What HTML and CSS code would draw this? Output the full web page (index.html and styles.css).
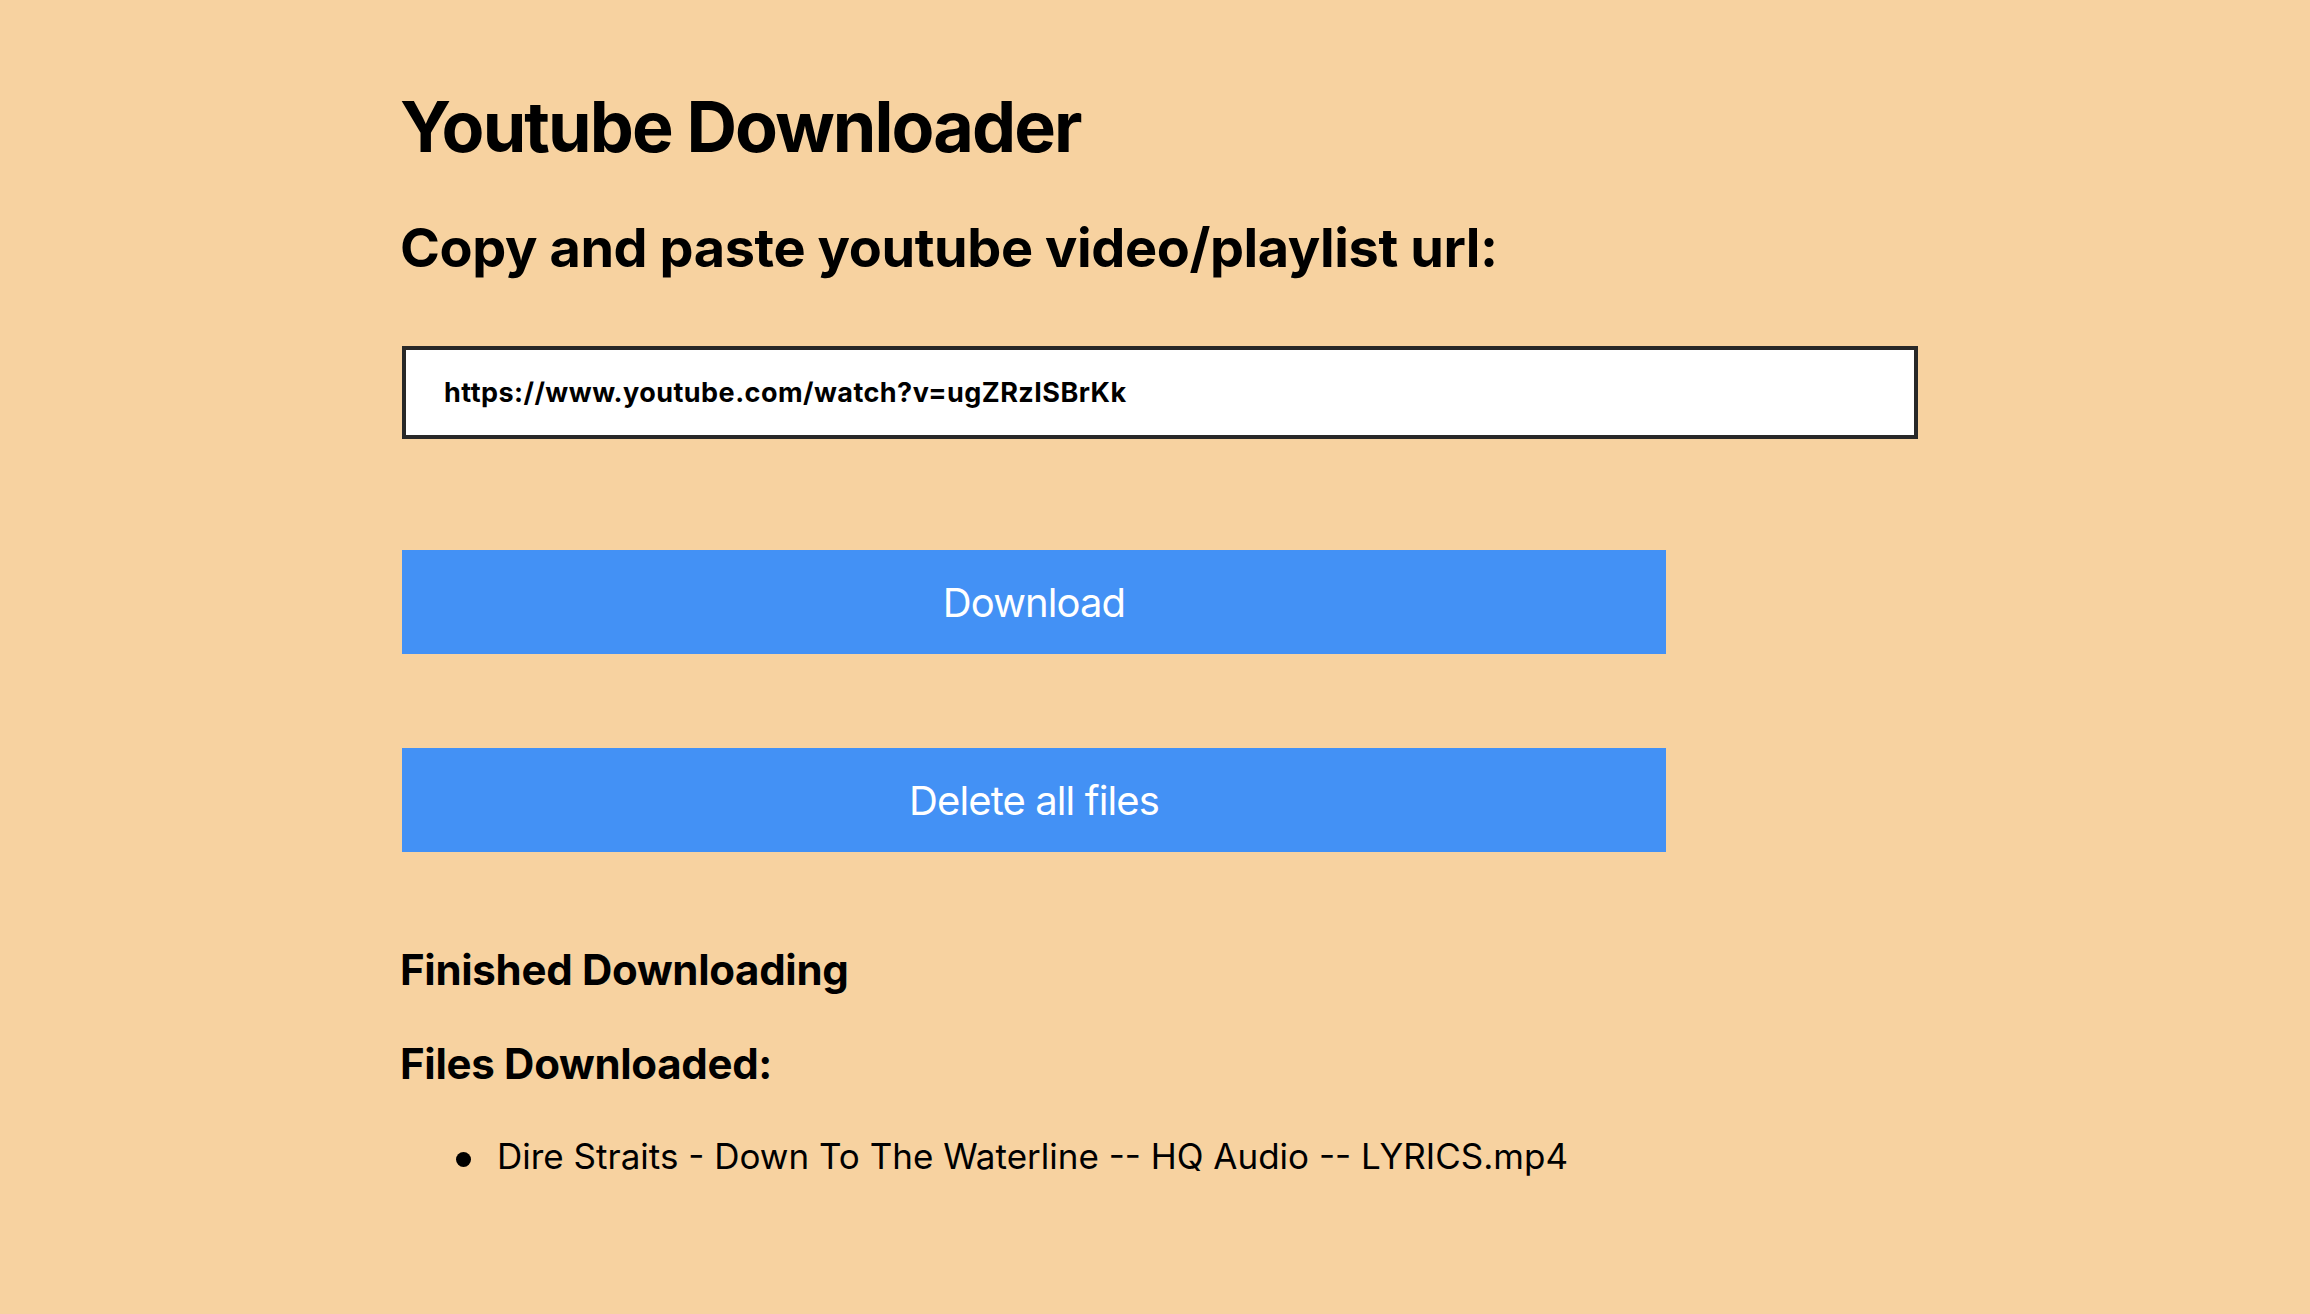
FILE: index.html
```html
<!DOCTYPE html>
<html>
<head>
<meta charset="utf-8">
<title>Youtube Downloader</title>
<link rel="stylesheet" href="styles.css">
</head>
<body>
<main class="page">
  <h1 class="title">Youtube Downloader</h1>
  <h2 class="subtitle">Copy and paste youtube video/playlist url:</h2>
  <input class="url-input" type="text" value="https://www.youtube.com/watch?v=ugZRzISBrKk">
  <button class="btn btn-download">Download</button>
  <button class="btn btn-delete">Delete all files</button>
  <h3 class="status">Finished Downloading</h3>
  <h3 class="files-title">Files Downloaded:</h3>
  <ul class="files">
    <li class="file">Dire Straits - Down To The Waterline -- HQ Audio -- LYRICS.mp4</li>
  </ul>
</main>
</body>
</html>
```

FILE: styles.css
```css
html, body {
  margin: 0;
  padding: 0;
  background: #f7d2a0;
}

body {
  font-family: Inter, "Noto Sans", sans-serif;
  color: #000;
  min-height: 1314px;
}

.page {
  display: flex;
  flex-direction: column;
  align-items: flex-start;
  padding: 92px 0 0 400px;
}

.title {
  margin: 0;
  font-size: 70px;
  line-height: 1;
  font-weight: 700;
  letter-spacing: -1.9px;
}

.subtitle {
  margin: 59px 0 0;
  font-size: 54px;
  line-height: 1;
  font-weight: 700;
  letter-spacing: -0.4px;
}

.url-input {
  margin: 71px 0 0 2px;
  box-sizing: border-box;
  width: 1516px;
  height: 93px;
  border: 4px solid #282828;
  background: #fff;
  padding: 0 0 0 38px;
  font-family: Inter, "Noto Sans", sans-serif;
  font-size: 27px;
  font-weight: 700;
  letter-spacing: 0.45px;
  color: #000;
  outline: none;
}

.btn {
  box-sizing: border-box;
  width: 1264px;
  height: 104px;
  margin-left: 2px;
  border: none;
  background: #4391f5;
  color: #fff;
  font-family: Inter, "Noto Sans", sans-serif;
  font-size: 40px;
  font-weight: 400;
  letter-spacing: -0.9px;
  padding: 0;
}

.btn-download {
  margin-top: 111px;
}

.btn-delete {
  margin-top: 94px;
}

.status {
  margin: 97px 0 0;
  font-size: 42px;
  line-height: 1;
  font-weight: 700;
  letter-spacing: -0.3px;
}

.files-title {
  margin: 52px 0 0;
  font-size: 42px;
  line-height: 1;
  font-weight: 700;
  letter-spacing: -0.3px;
}

.files {
  margin: 54px 0 0;
  padding-left: 56px;
  list-style: none;
  font-size: 35px;
  line-height: 1;
}

.file::before {
  content: "";
  display: inline-block;
  width: 15px;
  height: 15px;
  border-radius: 50%;
  background: #000;
  margin-right: 26px;
  vertical-align: 2.5px;
}
```
